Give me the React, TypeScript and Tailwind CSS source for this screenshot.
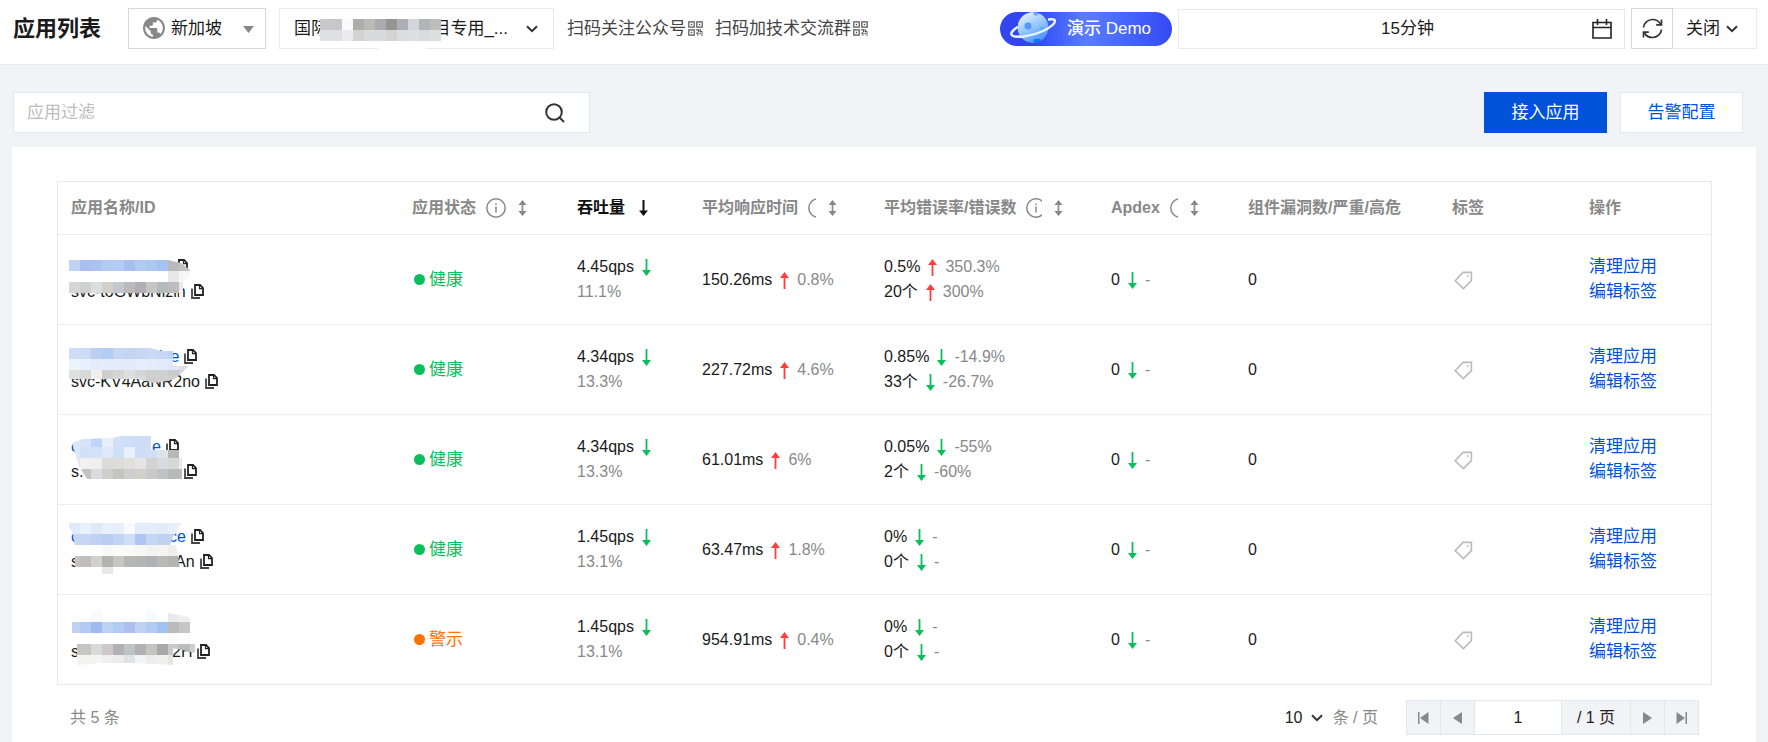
import { useState } from 'react'
import type { ReactNode } from 'react'

type Trend = 'up' | 'down'
type Strip = [x: number, y: number, colors: string]
type Line = { start: string; gap: number; end: string }

type AppRow = {
  name: Line
  id: Line
  mask: { clip: string; strips: Strip[] }
  status: 'ok' | 'warn'
  qps: string
  qpsRate: string
  rt: string
  rtRate: string
  errTrend: Trend
  err: string
  errRate: string
  errCount: string
  errCountRate: string
}

// ── Data ───────────────────────────
// mask strips are runs of 11px blocks, '-' leaves a block empty
const rows: AppRow[] = [
  {
    name: { start: '', gap: 104, end: '' },
    id: { start: 'svc-toGWbNizin', gap: 0, end: '' },
    mask: {
      clip: '0,10 99,10 112,13 121,20 121,27 114,32 114,48 110,48 110,43 0,43',
      strips: [
        [0, 10, '#bdd3f2 #a9c0ee #abc3f0 #b2cbef #b2ccf3 #a9bdee #b1cbf0 #abc8ef #a3c4f2 #bababa #c0c0c0'],
        [99, 21, '#e8e8e8 #f6f6f6'],
        [0, 32, '#d6d6d6 #cfd0cf #dadedd #d3d0c8 #c3c8d0 #bcbabd #b0aeb3 #c5c5c4 #b4bcbb #bdbdbd #e9e9e9'],
        [110, 40, '#f3f3f3'],
      ],
    },
    status: 'ok', qps: '4.45qps', qpsRate: '11.1%', rt: '150.26ms', rtRate: '0.8%',
    errTrend: 'up', err: '0.5%', errRate: '350.3%', errCount: '20个', errCountRate: '300%',
  },
  {
    name: { start: '', gap: 88, end: 'ice' },
    id: { start: 'svc-KV4AaNR2no', gap: 0, end: '' },
    mask: {
      clip: '0,8 81,8 92,11 104,11 104,26 120,26 107,38 99,41 84,43 70,39 0,39',
      strips: [
        [0, 8, '#cdddf8 #cbdaf5 #bdcff1 #b3ccf5 #c6d6f5 #c3d5f4 #c6d6f3 #c9d9f7 #c4d7f6 #bfd4f5'],
        [0, 19, '#ecf3fb #e6effc #e4ebfb #e6ecfa #e4ebf9 #e3ebfb #e6edfb #e4ebf9 #e2eafb #dfe8fb #dddfe2'],
        [0, 30, '#e0e0e0 #d8d8d6 #efefef #cfcfcf #d5d5d5 #dededc #d3d5d9 #cfcfcf #d0d0d0 #cbcbcb #d3d3d3'],
        [66, 36, '#d9d9d9 #cfcfcf #d0d0d0 #cfcfcf'],
      ],
    },
    status: 'ok', qps: '4.34qps', qpsRate: '13.3%', rt: '227.72ms', rtRate: '4.6%',
    errTrend: 'down', err: '0.85%', errRate: '-14.9%', errCount: '33个', errCountRate: '-26.7%',
  },
  {
    name: { start: 'c', gap: 73, end: 'e' },
    id: { start: 's.', gap: 96, end: '' },
    mask: {
      clip: '3,13 14,9 44,8 52,6 82,6 82,20 110,20 110,28 113,28 113,49 18,49 10,36',
      strips: [
        [0, 6, '#dce6fa #d6e2f7 #bfd5f7 #e8effc #d1dff8 #cfdef8 #cedcf7 #cfddf8'],
        [0, 17, '#dce6fa #d3e1f6 #d2e2f8 #e1e9f9 #d0dff8 #eaf0fb #cedcf7 #d0def6 #dfe3ec #b8b8b8'],
        [0, 28, '#e4e7eb #f1f1f1 #efefef #dadbd8 #dcdcda #dfdfdc #e6e5e4 #d3d4d1 #d8dadf #d6d9d8 #ececec'],
        [0, 39, '#c4c4c4 #c5c3c2 #d9dcde #cdcfc8 #c4c5c0 #cecfd0 #d2d0cc #c8cac6 #bfc3c5 #b9b9b9 #bcbcbc'],
      ],
    },
    status: 'ok', qps: '4.34qps', qpsRate: '13.3%', rt: '61.01ms', rtRate: '6%',
    errTrend: 'down', err: '0.05%', errRate: '-55%', errCount: '2个', errCountRate: '-60%',
  },
  {
    name: { start: 'c', gap: 90, end: 'ce' },
    id: { start: 's', gap: 96, end: 'An' },
    mask: {
      clip: '0,3 113,3 104,17 101,25 107,25 111,47 44,47 44,54 33,54 33,47 6,47 6,25 4,14 0,7',
      strips: [
        [0, 3, '#dfe9fb #ebf1fb #dfe8f8 #e9f0fb #e7effc #f8fafd #e4edfa #e5ecfa #e2ebfa #e8eefa #edf2fb'],
        [0, 14, '#c6d6f3 #c5d6f4 #bfd2f2 #b9cef0 #c3d5f4 #cfdff8 #afc7f0 #c5d5f3 #c0d1f2 #bfd3f4 #dce6fa'],
        [33, 25, '#f8f8f7 #fafaf9 #fafaf9 #f7f7f6 #f3f3f2 #f4f4f3 #eeeeec'],
        [0, 36, '#c4c3c1 #bfbebc #d1d1d1 #b3b3b1 #c6c6c4 #b6b6b4 #b4b5b5 #b0b1b2 #b9b9b9 #b5b6b4 #c9c9c7'],
        [33, 47, '#e9e9e9'],
      ],
    },
    status: 'ok', qps: '1.45qps', qpsRate: '13.1%', rt: '63.47ms', rtRate: '1.8%',
    errTrend: 'down', err: '0%', errRate: '-', errCount: '0个', errCountRate: '-',
  },
  {
    name: { start: '', gap: 0, end: '' },
    id: { start: 's', gap: 93, end: '2H' },
    mask: {
      clip: '3,0 99,0 99,3 121,7 121,34 126,34 126,43 104,38 104,55 66,53 33,53 8,55 8,34 3,34',
      strips: [
        [22, 1, '#f8faff'],
        [77, 1, '#f8faff - #ebebeb #efefef'],
        [0, 12, '#bfd2f3 #b2caf2 #9dbbec #bdd1f3 #b1ccf2 #aebfee #bed2f3 #b3caf1 #a0c2f1 #bababa #c6c6c6'],
        [99, 23, '#fafafa #fcfcfc'],
        [0, 34, '#c4c4c4 #c6c6c5 #d8dbd9 #cec8ca #b2b0b1 #bec3c6 #b2b0b3 #c4c5c3 #a6a9a7 #c8c8c8 #b8bcbb #ccd0cf'],
        [0, 45, '#f2f2f0 #f3f3f1 #f4f4f2 #efefef #ededed #e0e2e4 #f2f4f7 #ededed #efefef #e5e5e4'],
      ],
    },
    status: 'warn', qps: '1.45qps', qpsRate: '13.1%', rt: '954.91ms', rtRate: '0.4%',
    errTrend: 'down', err: '0%', errRate: '-', errCount: '0个', errCountRate: '-',
  },
]

const projectMask: Strip[] = [
  [0, 0, '#c8c8ca #c6c6cb #fafafa #adadad #bcbab6 #a9abb1 #979591 #adafb4 #d2d6dc #b3b5b5 #bdbebb #bcbcbc'],
  [0, 11, '#dfe0e4 #e0e0e3 #ebebee #d3d3d3 #dadada #d9dadb #d4d4d2 #dcdcde #dedfe0 #d9dbdc #dcdfdd #dedede'],
]

// ── Icons ───────────────────────────
function Blocks({ strips }: { strips: Strip[] }) {
  return (
    <>
      {strips.map(([x, y, colors]) =>
        colors.split(' ').map((c, i) =>
          c === '-' ? null : <rect key={`${x}-${y}-${i}`} x={x + i * 11} y={y} width={11} height={11} fill={c} />
        )
      )}
    </>
  )
}

function TrendArrow({ trend }: { trend: Trend }) {
  return trend === 'up' ? (
    <svg width="9" height="17" viewBox="0 0 9 17" className="mt-0.5 shrink-0 text-[#ff3e3e]" fill="currentColor">
      <path d="M4.5 0 9 6H5.4v11H3.6V6H0z" />
    </svg>
  ) : (
    <svg width="9" height="17" viewBox="0 0 9 17" className="mt-0.5 shrink-0 text-[#0abf5b]" fill="currentColor">
      <path d="M4.5 17 0 11h3.6V0h1.8v11H9z" />
    </svg>
  )
}

function SortIcon() {
  return (
    <svg width="9" height="16" viewBox="0 0 9 16" fill="#888">
      <path d="M4.5 0 8.5 5H5.3v6h3.2l-4 5-4-5h3.2V5H.5z" />
    </svg>
  )
}

function InfoIcon() {
  return (
    <svg width="20" height="20" viewBox="0 0 20 20" className="shrink-0" fill="none" stroke="#888" strokeWidth="1.5">
      <circle cx="10" cy="10" r="9.2" />
      <path d="M10 8.5V14.5M10 5.5V7" />
    </svg>
  )
}

function Chevron() {
  return (
    <svg width="12" height="8" viewBox="0 0 12 8" className="shrink-0" fill="none" stroke="#333" strokeWidth="2">
      <path d="m1 1.2 5 5 5-5" />
    </svg>
  )
}

function CopyIcon() {
  return (
    <svg width="13" height="15" viewBox="0 0 13 15" fill="none" stroke="#222" strokeWidth="1.8">
      <path d="M4 1h5l3 3.2V11H4z" />
      <path d="M8.5 1v3.6H12" strokeWidth="1.2" />
      <path d="M1 4.5V14h8" stroke="#444" />
    </svg>
  )
}

function QrIcon() {
  return (
    <svg width="15" height="15" viewBox="0 0 15 15" fill="none" stroke="#555" strokeWidth="1.2">
      <path d="M.8.8h5.4v5.4H.8zM8.8.8h5.4v5.4H8.8zM.8 8.8h5.4v5.4H.8z" />
      <path d="M2.8 3.5h1.4M10.8 3.5h1.4M2.8 11.5h1.4" strokeWidth="1.4" />
      <path d="M8.2 8.8h2.4v2.4M12.4 8.2v2.4h2M8.2 12.2h1.6v2.4M11.6 12.6h1.4M13.2 14.2h1.4M14.2 11.4v1.4" />
    </svg>
  )
}

function TagIcon() {
  return (
    <svg width="19" height="19" viewBox="0 0 19 19" fill="none" stroke="#bbb" strokeWidth="1.6">
      <path d="M1.2 9.8 9 1.4h8.4v8.2l-8 8z" />
      <circle cx="13.8" cy="5" r="0.9" fill="#bbb" stroke="none" />
    </svg>
  )
}

function GlobeIcon() {
  return (
    <svg width="22" height="22" viewBox="2 2 20 20" fill="#888">
      <path d="M12 2C6.48 2 2 6.48 2 12s4.48 10 10 10 10-4.48 10-10S17.52 2 12 2zm-1 17.93c-3.95-.49-7-3.85-7-7.93 0-.62.08-1.21.21-1.79L9 15v1c0 1.1.9 2 2 2v1.93zm6.9-2.54c-.26-.81-1-1.39-1.9-1.39h-1v-3c0-.55-.45-1-1-1H8v-2h2c.55 0 1-.45 1-1V7h2c1.1 0 2-.9 2-2v-.41c2.93 1.19 5 4.06 5 7.41 0 2.08-.8 3.97-2.1 5.39z" />
    </svg>
  )
}

function PlanetIcon() {
  return (
    <svg width="46" height="34" viewBox="0 0 46 34" fill="none">
      <defs>
        <linearGradient id="planet" x1="12" y1="2" x2="28" y2="32" gradientUnits="userSpaceOnUse">
          <stop stopColor="#e4f2ff" />
          <stop offset="0.5" stopColor="#93c5ff" />
          <stop offset="1" stopColor="#3d8bff" />
        </linearGradient>
        <clipPath id="planetBody">
          <circle cx="23" cy="15.5" r="15.5" />
        </clipPath>
      </defs>
      <path d="M8 14.5C2 18 0 21 1.5 23c1.5 2 8 1.6 15 0M38 8c4-.8 6.5-.2 7 1.5" stroke="#a9c6ff" strokeWidth="2" />
      <g clipPath="url(#planetBody)">
        <circle cx="23" cy="15.5" r="15.5" fill="url(#planet)" />
        <circle cx="18" cy="14" r="3.5" fill="#4f9bfa" />
        <circle cx="26" cy="1" r="2.6" fill="#62a8fb" />
        <circle cx="32" cy="17" r="2" fill="#62a8fb" />
        <ellipse cx="27" cy="29" rx="3.5" ry="2.2" fill="#1673f5" />
      </g>
      <path d="M8 15C2 18.5.5 21.5 2 23.3c3 3.5 20 .8 31-4.3C42 14.8 46.5 10 44.5 7.8 43.5 6.8 41 6.8 38 7.4" stroke="#eaf3ff" strokeWidth="2.2" />
    </svg>
  )
}

// ── Table pieces ───────────────────────────
function Head({ children, info, sortable }: { children: ReactNode; info?: ReactNode; sortable?: boolean }) {
  return (
    <th className="h-[52px] px-[13px] text-left font-bold whitespace-nowrap text-[#888]">
      <div className="flex items-center">
        {children}
        {info}
        {sortable && (
          <button type="button" aria-label="排序" className="ml-3">
            <SortIcon />
          </button>
        )}
      </div>
    </th>
  )
}

function MaskedLine({ line, link, copy = true }: { line: Line; link?: boolean; copy?: boolean }) {
  return (
    <div className="flex h-[25px] items-center">
      <span className={link ? 'text-[#0052d9]' : ''}>{line.start}</span>
      <span style={{ width: line.gap }} />
      <span className={link ? 'text-[#0052d9]' : ''}>{line.end}</span>
      {copy && (
        <button type="button" aria-label="复制" className={line.start || line.end ? 'ml-[5px]' : ''}>
          <CopyIcon />
        </button>
      )}
    </div>
  )
}

function Metric({ value, trend, rate }: { value: string; trend: Trend; rate?: string }) {
  return (
    <div className="flex h-[25px] items-center gap-2">
      <span>{value}</span>
      <TrendArrow trend={trend} />
      {rate && <span className="text-[#888]">{rate}</span>}
    </div>
  )
}

function Row({ row }: { row: AppRow }) {
  const ok = row.status === 'ok'
  return (
    <tr className="h-[90px] border-t border-[#ebedf2] whitespace-nowrap *:px-[13px]">
      <td>
        <div className="relative">
          <MaskedLine line={row.name} link copy={row.status === 'ok'} />
          <MaskedLine line={row.id} />
          <svg width="130" height="58" viewBox="0 0 130 58" className="absolute -top-1 -left-0.5" shapeRendering="crispEdges">
            <clipPath id={`mask-${row.rt}`}>
              <polygon points={row.mask.clip} />
            </clipPath>
            <g clipPath={`url(#mask-${row.rt})`}>
              <Blocks strips={row.mask.strips} />
            </g>
          </svg>
        </div>
      </td>
      <td>
        <div className={ok ? 'flex items-center gap-1 text-[17px] text-[#0abf5b]' : 'flex items-center gap-1 text-[17px] text-[#ff7200]'}>
          <span className="ml-0.5 size-[11px] rounded-full bg-current" />
          {ok ? '健康' : '警示'}
        </div>
      </td>
      <td>
        <Metric value={row.qps} trend="down" />
        <div className="text-[#888]">{row.qpsRate}</div>
      </td>
      <td>
        <Metric value={row.rt} trend="up" rate={row.rtRate} />
      </td>
      <td>
        <Metric value={row.err} trend={row.errTrend} rate={row.errRate} />
        <Metric value={row.errCount} trend={row.errTrend} rate={row.errCountRate} />
      </td>
      <td>
        <Metric value="0" trend="down" rate="-" />
      </td>
      <td>0</td>
      <td>
        <button type="button" aria-label="标签" className="block pt-0.5 pl-0.5">
          <TagIcon />
        </button>
      </td>
      <td className="text-[17px] text-[#0052d9]">
        <a href="#clean" className="block">清理应用</a>
        <a href="#tags" className="block">编辑标签</a>
      </td>
    </tr>
  )
}

// ── Header bar ───────────────────────────
function TopBar() {
  return (
    <header className="flex items-center border-b border-[#e7eaef] bg-white pt-2 pr-[11px] pb-[15px] pl-[13px] text-[17px]">
      <h1 className="text-[22px] font-bold whitespace-nowrap">应用列表</h1>
      <div className="relative ml-[27px]">
        <span className="pointer-events-none absolute top-[9px] left-[15px]">
          <GlobeIcon />
        </span>
        <select aria-label="地域" className="block h-[41px] w-[138px] appearance-none border border-[#d3d8e2] pl-[42px]">
          <option>新加坡</option>
        </select>
        <span className="pointer-events-none absolute top-[18px] right-3">
          <svg width="11" height="7" viewBox="0 0 11 7" fill="#888">
            <path d="M0 0h11L5.5 7z" />
          </svg>
        </span>
      </div>
      <div className="relative ml-[13px]">
        <select aria-label="业务系统" className="block h-[41px] w-[275px] appearance-none border border-[#e7eaf1] pl-3.5">
          <option>国际{'\u3000'.repeat(6)}{'\u2009'}目专用_...</option>
        </select>
        <svg width="124" height="32" viewBox="0 0 124 32" className="pointer-events-none absolute top-[11px] left-[41px]" shapeRendering="crispEdges">
          <Blocks strips={projectMask.map(([x, y, c]) => [x, y, c.slice(0, -8)] as Strip)} />
          <rect x="58" y="28" width="48" height="3" fill="#fff" />
        </svg>
        <span className="pointer-events-none absolute top-[17px] right-4 flex">
          <Chevron />
        </span>
      </div>
      <nav className="ml-[13px] flex gap-3 whitespace-nowrap text-[#444]">
        <a href="#follow" className="flex items-center gap-0.5">扫码关注公众号<QrIcon /></a>
        <a href="#group" className="flex items-center gap-0.5">扫码加技术交流群<QrIcon /></a>
      </nav>
      <button
        type="button"
        className="ml-auto flex h-[34px] w-[172px] shrink-0 items-center gap-[11px] rounded-full bg-linear-to-r from-[#3146f2] from-20% via-[#5a7dff] via-50% to-[#3448f3] pl-2.5 font-medium text-white"
      >
        <PlanetIcon />
        演示 Demo
      </button>
      <button type="button" className="ml-1.5 flex h-10 w-[447px] items-center border border-[#e7eaf1] pr-3">
        <span className="flex-1 pl-11">15分钟</span>
        <svg width="20" height="20" viewBox="0 0 20 20" fill="none" stroke="#222" strokeWidth="1.6">
          <path d="M1 3.5h18V19H1zM1 8.5h18M5.5 0v6M14.5 0v6" />
        </svg>
      </button>
      <button type="button" aria-label="刷新" className="ml-1.5 flex h-[41px] w-[42px] items-center justify-center border border-[#d3d8e2]">
        <svg width="21" height="21" viewBox="0 0 21 21" fill="none" stroke="#333" strokeWidth="1.7">
          <path d="M1.5 9.5C1.8 5 5.8 1.5 10.5 1.5c3.5 0 6.5 1.8 8 4.5M19.5 11.5c-.3 4.5-4.3 8-9 8-3.5 0-6.5-1.8-8-4.5" />
          <path d="M19.5 1.5v5.3h-5.3M1.5 19.5v-5.3h5.3" />
        </svg>
      </button>
      <button type="button" className="flex h-[41px] w-[84px] items-center gap-1.5 border border-l-0 border-[#e7eaf1] pl-[13px]">
        关闭
        <Chevron />
      </button>
    </header>
  )
}

function Pager() {
  const [page, setPage] = useState('1')
  const step = 'flex w-[34px] items-center justify-center border-r border-[#e3e6ee] bg-[#f2f3f7]'
  return (
    <footer className="flex items-center justify-between pt-[15px] pr-[13px] pl-3.5 text-[#888]">
      <span>共 5 条</span>
      <div className="flex items-center">
        <label className="flex items-center gap-2.5">
          <span className="relative flex items-center text-[#222]">
            <select className="w-[38px] appearance-none">
              <option>10</option>
            </select>
            <span className="pointer-events-none absolute right-0">
              <Chevron />
            </span>
          </span>
          条 / 页
        </label>
        <div className="ml-7 flex h-[35px] border border-r-0 border-[#e3e6ee] text-[#222]">
          <button type="button" aria-label="首页" className={step}>
            <svg width="11" height="12" viewBox="0 0 11 12" fill="#888"><path d="M0 0h1.5v12H0zM10.5 0v12L2 6z" /></svg>
          </button>
          <button type="button" aria-label="上一页" className={step}>
            <svg width="9" height="12" viewBox="0 0 9 12" fill="#888"><path d="M9 0v12L0 6z" /></svg>
          </button>
          <input
            aria-label="页码"
            value={page}
            onChange={e => setPage(e.target.value)}
            className="w-[87px] border-r border-[#e3e6ee] bg-white text-center"
          />
          <span className="flex w-[69px] items-center justify-center border-r border-[#e3e6ee] bg-[#f2f3f7]">/ 1 页</span>
          <button type="button" aria-label="下一页" className={step}>
            <svg width="9" height="12" viewBox="0 0 9 12" fill="#888"><path d="M0 0v12l9-6z" /></svg>
          </button>
          <button type="button" aria-label="末页" className={step}>
            <svg width="11" height="12" viewBox="0 0 11 12" fill="#888"><path d="M9.5 0H11v12H9.5zM.5 0v12L9 6z" /></svg>
          </button>
        </div>
      </div>
    </footer>
  )
}

export default function App() {
  const [filter, setFilter] = useState('')

  return (
    <div className="flex min-h-screen flex-col bg-[#f2f3f7] font-['Liberation_Sans','Noto_Sans_CJK_SC',sans-serif] text-[16px] leading-[25px] text-[#1a1a1a]">
      <TopBar />

      <div className="flex items-center justify-between pt-[27px] pr-[25px] pb-3.5 pl-[13px] text-[17px]">
        <form className="flex h-[41px] w-[577px] items-center border border-[#e3e7ef] bg-white pr-6 pl-[13px]">
          <input
            aria-label="应用过滤"
            placeholder="应用过滤"
            value={filter}
            onChange={e => setFilter(e.target.value)}
            className="min-w-0 flex-1 outline-none placeholder:text-[#bbb]"
          />
          <button type="submit" aria-label="搜索">
            <svg width="20" height="20" viewBox="0 0 20 20" fill="none" stroke="#333" strokeWidth="2">
              <circle cx="9" cy="9" r="7.8" />
              <path d="m14.5 14.5 4.5 4.5" />
            </svg>
          </button>
        </form>
        <div className="flex gap-[13px]">
          <button type="button" className="h-[41px] w-[123px] bg-[#0052d9] text-white">接入应用</button>
          <button type="button" className="h-[41px] w-[123px] border border-[#e3e7ef] bg-white text-[#0052d9]">告警配置</button>
        </div>
      </div>

      <main className="mx-3 flex-1 bg-white px-11 pt-[34px] pb-1.5">
        <div className="ml-px border border-[#e7e8ee]">
          <table className="w-full table-fixed border-collapse">
            <colgroup>
              <col />
              <col className="w-[165px]" />
              <col className="w-[125px]" />
              <col className="w-[182px]" />
              <col className="w-[227px]" />
              <col className="w-[137px]" />
              <col className="w-[204px]" />
              <col className="w-[137px]" />
              <col className="w-[135px]" />
            </colgroup>
            <thead>
              <tr>
                <Head>应用名称/ID</Head>
                <Head info={<span className="ml-2.5"><InfoIcon /></span>} sortable>应用状态</Head>
                <Head>
                  <span className="text-[#111]">吞吐量</span>
                  <svg width="9" height="16" viewBox="0 0 9 16" className="ml-3.5" fill="#111">
                    <path d="M4.5 16 0 10.5h3.5V0h2v10.5H9z" />
                  </svg>
                </Head>
                <Head info={<span className="ml-2.5 w-2 overflow-hidden"><InfoIcon /></span>} sortable>平均响应时间</Head>
                <Head info={<span className="ml-2.5 w-4 overflow-hidden"><InfoIcon /></span>} sortable>平均错误率/错误数</Head>
                <Head info={<span className="ml-2.5 w-2 overflow-hidden"><InfoIcon /></span>} sortable>Apdex</Head>
                <Head>组件漏洞数/严重/高危</Head>
                <Head>标签</Head>
                <Head>操作</Head>
              </tr>
            </thead>
            <tbody>
              {rows.map(row => (
                <Row key={row.rt} row={row} />
              ))}
            </tbody>
          </table>
        </div>
        <Pager />
      </main>
    </div>
  )
}
